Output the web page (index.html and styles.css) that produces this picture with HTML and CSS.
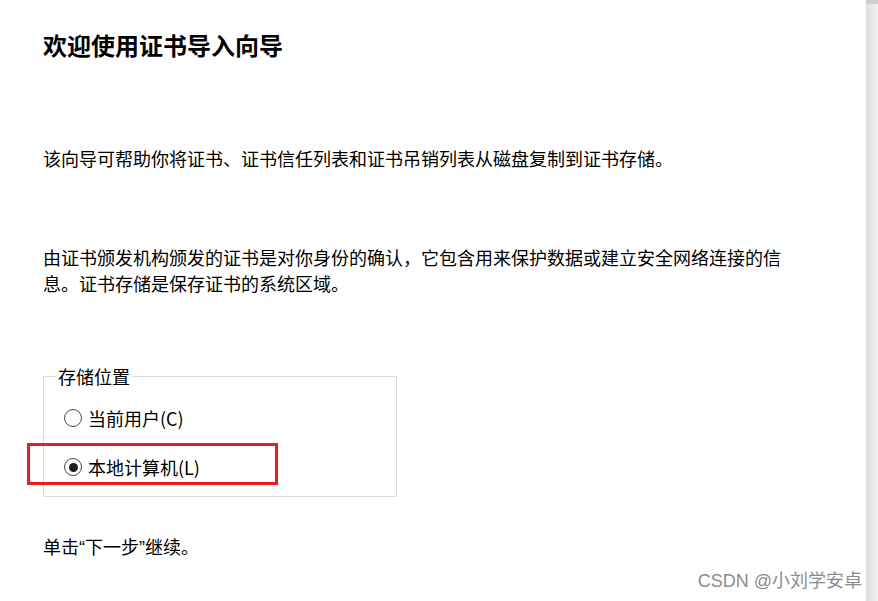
FILE: index.html
```html
<!DOCTYPE html>
<html lang="zh-CN">
<head>
  <meta charset="UTF-8">
  <title>证书导入向导</title>
  <link rel="stylesheet" href="styles.css">
</head>
<body>

<div class="wizard">
  <div class="content">
    <h1 class="title">欢迎使用证书导入向导</h1>

    <p class="intro">该向导可帮助你将证书、证书信任列表和证书吊销列表从磁盘复制到证书存储。</p>

    <p class="desc">由证书颁发机构颁发的证书是对你身份的确认，它包含用来保护数据或建立安全网络连接的信息。证书存储是保存证书的系统区域。</p>

    <!-- 存储位置 -->
    <fieldset class="store">
      <legend>存储位置</legend>
      <label class="option">
        <span class="radio"></span>当前用户(C)
      </label>
      <label class="option selected marked">
        <span class="radio"></span>本地计算机(L)
      </label>
    </fieldset>

    <p class="next">单击“下一步”继续。</p>
  </div>
  <div class="scrollbar"></div>
</div>

<div class="watermark">CSDN @小刘学安卓</div>

</body>
</html>
```

FILE: styles.css
```css
/* 证书导入向导 */
html, body {
  height: 100%;
}
body {
  margin: 0;
  font-family: "Noto Sans CJK SC", "Noto Sans", sans-serif;
  color: #000;
  background: #fff;
  position: relative;
  overflow: hidden;
}
.wizard {
  display: flex;
  height: 100%;
}
.content {
  flex: 1;
  padding: 29px 0 0 43px;
}
.title {
  margin: 0;
  font-size: 24px;
  line-height: 32px;
  font-weight: bold;
}
.intro,
.desc,
.next {
  margin: 0;
  font-size: 18px;
  line-height: 26px;
}
.intro {
  margin-top: 84px;
}
.desc {
  margin-top: 73px;
  max-width: 745px;
}
.store {
  margin: 70px 0 0 0;
  width: 354px;
  box-sizing: border-box;
  border: 1px solid #dcdcdc;
  padding: 18px 12px 15px 12px;
}
.store legend {
  padding: 0 2px;
  font-size: 18px;
  line-height: 20px;
}
.option {
  display: flex;
  align-items: center;
  gap: 6px;
  margin-left: 8px;
  font-size: 18px;
  line-height: 28px;
  position: relative;
}
.option + .option {
  margin-top: 21px;
}
.radio {
  width: 18px;
  height: 18px;
  box-sizing: border-box;
  border: 1px solid #4a4a4a;
  border-radius: 50%;
  display: flex;
  align-items: center;
  justify-content: center;
}
.selected .radio::before {
  content: "";
  width: 9px;
  height: 9px;
  border-radius: 50%;
  background: #1f1f1f;
}
/* 红色标注框 */
.marked::after {
  content: "";
  position: absolute;
  left: -37px;
  top: -10px;
  width: 251px;
  height: 42px;
  box-sizing: border-box;
  border: 3px solid #ed1c24;
}
.next {
  margin-top: 38px;
  font-family: "Liberation Sans", "Noto Sans CJK SC", sans-serif;
}
.scrollbar {
  width: 12px;
  background: linear-gradient(to right, #dedede, #f2f2f2);
  border-top: 4px solid #cfcfcf;
}
.watermark {
  position: absolute;
  right: 16px;
  bottom: 9px;
  font-family: "Liberation Sans", "Noto Sans CJK SC", sans-serif;
  font-size: 18px;
  line-height: 22px;
  color: #8c8c8c;
}
```
